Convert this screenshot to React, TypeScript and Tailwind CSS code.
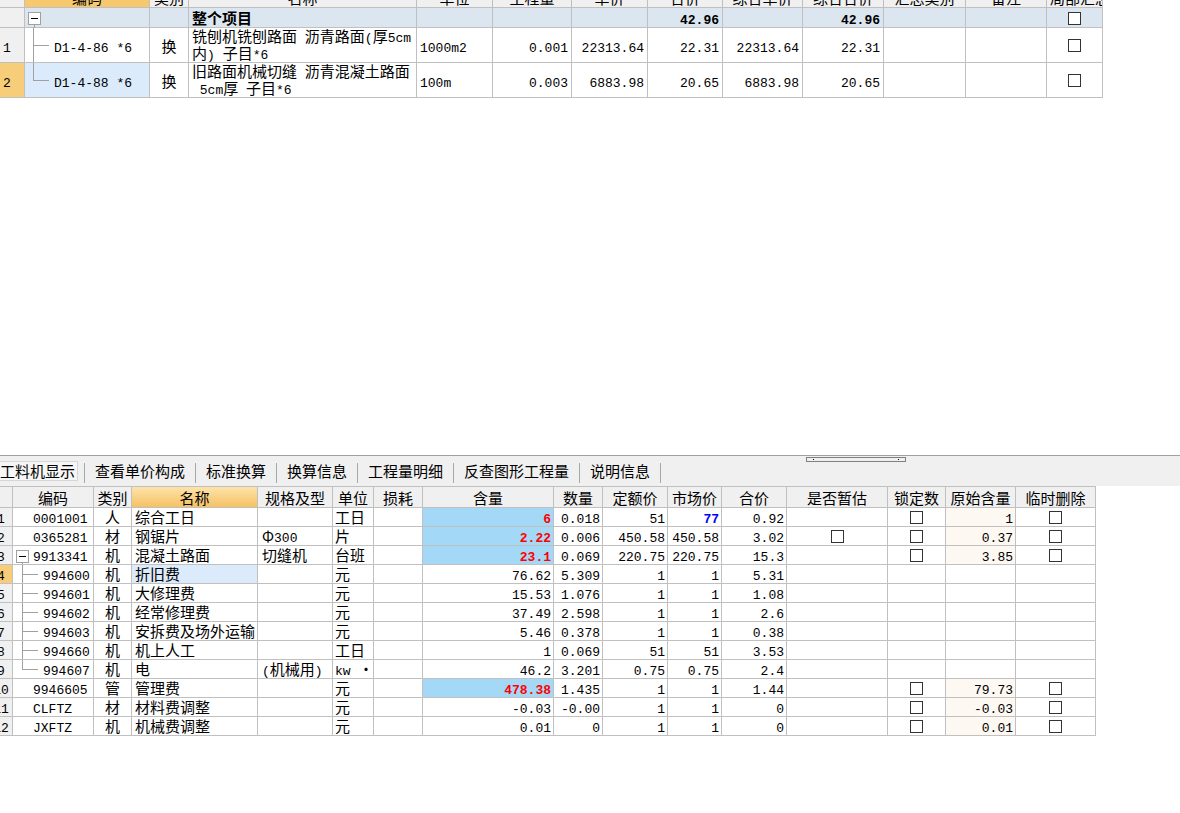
import React from "react";

const MONO = "font-['Liberation_Mono',monospace] text-[13px] leading-none whitespace-pre";

function Txt({ s, bold }: { s: string; bold?: boolean }) {
  const parts = s.split(/([\x20-\x7e]+)/).filter((p) => p.length > 0);
  return (
    <span className={bold ? "font-bold whitespace-pre" : "whitespace-pre"}>
      {parts.map((p, i) =>
        /^[\x20-\x7e]+$/.test(p) ? (
          <span key={i} className={MONO}>
            {p}
          </span>
        ) : (
          <span key={i}>{p}</span>
        )
      )}
    </span>
  );
}

function Check() {
  return <span className="inline-block w-[13px] h-[13px] border border-[#333] bg-white box-border" />;
}

function MinusBox() {
  return (
    <span className="absolute w-[13px] h-[13px] border border-[#a0a0a0] bg-white box-border flex items-center justify-center">
      <span className="block w-[7px] h-px bg-black" />
    </span>
  );
}

type Align = "l" | "r" | "c";
const alignCls = (a: Align) => (a === "l" ? "justify-start" : a === "r" ? "justify-end" : "justify-center");

/* ---------------- Top table ---------------- */
const TW = [25, 125, 39, 228, 76, 79, 76, 75, 80, 81, 82, 81, 56];
const THEAD = ["", "编码", "类别", "名称", "单位", "工程量", "单价", "合价", "综合单价", "综合合价", "汇总类别", "备注", "局部汇总"];

function TopTable() {
  const cellBase = "relative flex items-center border-r border-b border-[#c0c0c0] box-border overflow-hidden shrink-0";
  return (
    <div className="w-[1103px]">
      {/* header (scrolled / clipped) */}
      <div className="flex h-[22px] -mt-[14px]">
        {THEAD.map((h, i) => (
          <div
            key={i}
            style={{ width: TW[i] }}
            className={
              "relative flex items-end border-r border-b border-[#c0c0c0] box-border overflow-hidden shrink-0 leading-[19px] " +
              (i === 1 ? "bg-[#f7c86e] " : "bg-[#f0f0f0] ") +
              (i === 12 ? "justify-start pl-[3px]" : "justify-center")
            }
          >
            <Txt s={h} />
          </div>
        ))}
      </div>
      {/* 整个项目 */}
      <div className="flex h-[20px] leading-[19px]">
        {TW.map((w, i) => {
          let content: React.ReactNode = null;
          let a: Align = "l";
          if (i === 1)
            content = (
              <span className="relative block w-full h-full">
                <span className="absolute left-[3px] top-[4px]">
                  <MinusBox />
                </span>
                <span className="absolute left-[9px] top-[16px] w-px h-[4px] bg-[#a0a0a0]" />
              </span>
            );
          if (i === 3) content = <span className="pl-[3px]"><Txt s="整个项目" bold /></span>;
          if (i === 7 || i === 9) {
            content = <span className="pr-[3px]"><Txt s="42.96" bold /></span>;
            a = "r";
          }
          if (i === 12) {
            content = <span className="mt-[2px] flex"><Check /></span>;
            a = "c";
          }
          return (
            <div
              key={i}
              style={{ width: w }}
              className={cellBase + " " + alignCls(a) + " " + (i === 0 ? "bg-[#f0f0f0]" : "bg-[#dce6f0]") + (i === 1 ? " overflow-visible" : "")}
            >
              {content}
            </div>
          );
        })}
      </div>
      {[
        {
          n: "1",
          code: "D1-4-86 *6",
          name: ["铣刨机铣刨路面 沥青路面(厚5cm", "内) 子目*6"],
          unit: "1000m2",
          vals: ["0.001", "22313.64", "22.31", "22313.64", "22.31"],
          sel: false,
          last: false,
        },
        {
          n: "2",
          code: "D1-4-88 *6",
          name: ["旧路面机械切缝 沥青混凝土路面", " 5cm厚 子目*6"],
          unit: "100m",
          vals: ["0.003", "6883.98", "20.65", "6883.98", "20.65"],
          sel: true,
          last: true,
        },
      ].map((r, ri) => (
        <div key={ri} className="flex h-[35px] leading-[19px] bg-white">
          <div style={{ width: TW[0] }} className={cellBase + " justify-start pl-[3px] " + (r.sel ? "bg-[#f8cd7a]" : "bg-[#f0f0f0]")}>
            <Txt s={r.n} />
          </div>
          <div style={{ width: TW[1] }} className={cellBase + " justify-start pl-[29px] " + (r.sel ? "bg-[#dcebfc]" : "")}>
            <span className={"absolute left-[8px] top-0 w-px bg-[#a0a0a0] " + (r.last ? "h-[17px]" : "h-full")} />
            <span className="absolute left-[8px] top-[17px] w-[16px] h-px bg-[#a0a0a0]" />
            <Txt s={r.code} />
          </div>
          <div style={{ width: TW[2] }} className={cellBase + " justify-center"}>
            <Txt s="换" />
          </div>
          <div style={{ width: TW[3] }} className={cellBase + " justify-start pl-[3px]"}>
            <div className="flex flex-col leading-[15px]">
              <Txt s={r.name[0]} />
              <Txt s={r.name[1]} />
            </div>
          </div>
          <div style={{ width: TW[4] }} className={cellBase + " justify-start pl-[3px]"}>
            <Txt s={r.unit} />
          </div>
          {r.vals.map((v, vi) => (
            <div key={vi} style={{ width: TW[5 + vi] }} className={cellBase + " justify-end pr-[3px]"}>
              <Txt s={v} />
            </div>
          ))}
          <div style={{ width: TW[10] }} className={cellBase} />
          <div style={{ width: TW[11] }} className={cellBase} />
          <div style={{ width: TW[12] }} className={cellBase + " justify-center"}>
            <Check />
          </div>
        </div>
      ))}
    </div>
  );
}

/* ---------------- Tabs ---------------- */
const TABS = ["查看单价构成", "标准换算", "换算信息", "工程量明细", "反查图形工程量", "说明信息"];

function TabBar() {
  return (
    <div className="relative h-[31px] border-t border-[#a0a0a0] bg-[#f0f0f0] flex items-center">
      <div className="flex items-center h-[20px]">
        <div className="h-[20px] flex items-center -ml-[3px] pl-[2px] pr-[2px] border border-[#d6d6d6] bg-[#f6f6f6] leading-[18px]">
          <Txt s="工料机显示" />
        </div>
        <div className="w-[6px]" />
        <div className="w-px h-[20px] bg-[#a8a8a8] mt-[4px]" />
        {TABS.map((t, i) => (
          <React.Fragment key={i}>
            <div className="pl-[10px] pr-[10px] leading-[18px] flex items-center">
              <Txt s={t} />
            </div>
            <div className="w-px h-[20px] bg-[#a8a8a8] mt-[4px]" />
          </React.Fragment>
        ))}
      </div>
      {/* splitter grip */}
      <div className="absolute left-[806px] top-[1px] w-[100px] h-[5px] border border-[#808080] box-border bg-[#f0f0f0]">
        <span className="absolute left-[6px] top-[1px] w-px h-px bg-[#000080]" />
        <span className="absolute left-[91px] top-[1px] w-px h-px bg-[#000080]" />
      </div>
    </div>
  );
}

/* ---------------- Bottom table ---------------- */
const BW = [23, 81, 38, 126, 75, 41, 49, 131, 49, 65, 54, 65, 101, 58, 70, 80];
const BHEAD = ["", "编码", "类别", "名称", "规格及型", "单位", "损耗", "含量", "数量", "定额价", "市场价", "合价", "是否暂估", "锁定数", "原始含量", "临时删除"];

type BRow = {
  code: string;
  lvl: 0 | 1 | 2;
  lastChild?: boolean;
  cat: string;
  name: string;
  spec: string;
  unit: string;
  qty: string;
  qtyHi?: boolean;
  num: string;
  quota: string;
  market: string;
  marketBlue?: boolean;
  total: string;
  est?: boolean;
  lock?: boolean;
  orig: string;
  del?: boolean;
  sel?: boolean;
};

const BROWS: BRow[] = [
  { code: "0001001", lvl: 0, cat: "人", name: "综合工日", spec: "", unit: "工日", qty: "6", qtyHi: true, num: "0.018", quota: "51", market: "77", marketBlue: true, total: "0.92", lock: true, orig: "1", del: true },
  { code: "0365281", lvl: 0, cat: "材", name: "钢锯片", spec: "Φ300", unit: "片", qty: "2.22", qtyHi: true, num: "0.006", quota: "450.58", market: "450.58", total: "3.02", est: true, lock: true, orig: "0.37", del: true },
  { code: "9913341", lvl: 1, cat: "机", name: "混凝土路面", spec: "切缝机", unit: "台班", qty: "23.1", qtyHi: true, num: "0.069", quota: "220.75", market: "220.75", total: "15.3", lock: true, orig: "3.85", del: true },
  { code: "994600", lvl: 2, cat: "机", name: "折旧费", spec: "", unit: "元", qty: "76.62", num: "5.309", quota: "1", market: "1", total: "5.31", orig: "", sel: true },
  { code: "994601", lvl: 2, cat: "机", name: "大修理费", spec: "", unit: "元", qty: "15.53", num: "1.076", quota: "1", market: "1", total: "1.08", orig: "" },
  { code: "994602", lvl: 2, cat: "机", name: "经常修理费", spec: "", unit: "元", qty: "37.49", num: "2.598", quota: "1", market: "1", total: "2.6", orig: "" },
  { code: "994603", lvl: 2, cat: "机", name: "安拆费及场外运输", spec: "", unit: "元", qty: "5.46", num: "0.378", quota: "1", market: "1", total: "0.38", orig: "" },
  { code: "994660", lvl: 2, cat: "机", name: "机上人工", spec: "", unit: "工日", qty: "1", num: "0.069", quota: "51", market: "51", total: "3.53", orig: "" },
  { code: "994607", lvl: 2, lastChild: true, cat: "机", name: "电", spec: "(机械用)", unit: "kw ·", qty: "46.2", num: "3.201", quota: "0.75", market: "0.75", total: "2.4", orig: "" },
  { code: "9946605", lvl: 0, cat: "管", name: "管理费", spec: "", unit: "元", qty: "478.38", qtyHi: true, num: "1.435", quota: "1", market: "1", total: "1.44", lock: true, orig: "79.73", del: true },
  { code: "CLFTZ", lvl: 0, cat: "材", name: "材料费调整", spec: "", unit: "元", qty: "-0.03", num: "-0.00", quota: "1", market: "1", total: "0", lock: true, orig: "-0.03", del: true },
  { code: "JXFTZ", lvl: 0, cat: "机", name: "机械费调整", spec: "", unit: "元", qty: "0.01", num: "0", quota: "1", market: "1", total: "0", lock: true, orig: "0.01", del: true },
];

function BottomTable() {
  const cb = "relative flex items-center border-r border-b border-[#c0c0c0] box-border overflow-hidden shrink-0";
  return (
    <div className="-ml-[10px] w-[1106px]">
      <div className="flex h-[22px] border-t border-[#c0c0c0] leading-[19px]">
        {BHEAD.map((h, i) => (
          <div
            key={i}
            style={{ width: BW[i] }}
            className={
              cb +
              " justify-center whitespace-nowrap " +
              (i === 3 ? "bg-gradient-to-b from-[#fde3a9] to-[#f5c163]" : "bg-[#f0f0f0]")
            }
          >
            <Txt s={h} />
          </div>
        ))}
      </div>
      {BROWS.map((r, ri) => (
        <div key={ri} className="flex h-[19px] leading-[18px] bg-white">
          <div style={{ width: BW[0] }} className={cb + " justify-center " + (r.sel ? "bg-[#f8cd7a]" : "bg-[#f0f0f0]")}>
            <Txt s={String(ri + 1)} />
          </div>
          <div style={{ width: BW[1] }} className={cb + " justify-start " + (r.lvl === 2 ? "pl-[30px]" : "pl-[20px]")}>
            {r.lvl === 1 && (
              <>
                <span className="absolute left-[3px] top-[4px]">
                  <MinusBox />
                </span>
                <span className="absolute left-[9px] top-[17px] w-px h-[2px] bg-[#a0a0a0]" />
              </>
            )}
            {r.lvl === 2 && (
              <>
                <span className={"absolute left-[9px] top-0 w-px bg-[#a0a0a0] " + (r.lastChild ? "h-[10px]" : "h-full")} />
                <span className="absolute left-[9px] top-[9px] w-[16px] h-px bg-[#a0a0a0]" />
              </>
            )}
            <Txt s={r.code} />
          </div>
          <div style={{ width: BW[2] }} className={cb + " justify-center"}>
            <Txt s={r.cat} />
          </div>
          <div style={{ width: BW[3] }} className={cb + " justify-start pl-[3px] whitespace-nowrap " + (r.sel ? "bg-[#dcebfc]" : "")}>
            <Txt s={r.name} />
          </div>
          <div style={{ width: BW[4] }} className={cb + " justify-start pl-[4px] whitespace-nowrap"}>
            <Txt s={r.spec} />
          </div>
          <div style={{ width: BW[5] }} className={cb + " justify-start pl-[2px] whitespace-nowrap"}>
            <Txt s={r.unit} />
          </div>
          <div style={{ width: BW[6] }} className={cb} />
          <div style={{ width: BW[7] }} className={cb + " justify-end pr-[2px] " + (r.qtyHi ? "bg-[#a3d8f6] text-[#ff0000]" : "")}>
            <Txt s={r.qty} bold={r.qtyHi} />
          </div>
          <div style={{ width: BW[8] }} className={cb + " justify-end pr-[2px]"}>
            <Txt s={r.num} />
          </div>
          <div style={{ width: BW[9] }} className={cb + " justify-end pr-[2px]"}>
            <Txt s={r.quota} />
          </div>
          <div style={{ width: BW[10] }} className={cb + " justify-end pr-[2px] " + (r.marketBlue ? "text-[#0000ff]" : "")}>
            <Txt s={r.market} bold={r.marketBlue} />
          </div>
          <div style={{ width: BW[11] }} className={cb + " justify-end pr-[2px]"}>
            <Txt s={r.total} />
          </div>
          <div style={{ width: BW[12] }} className={cb + " justify-center"}>
            {r.est && <Check />}
          </div>
          <div style={{ width: BW[13] }} className={cb + " justify-center"}>
            {r.lock && <Check />}
          </div>
          <div style={{ width: BW[14] }} className={cb + " justify-end pr-[2px] " + (r.orig ? "bg-[#fdf8f2]" : "")}>
            <Txt s={r.orig} />
          </div>
          <div style={{ width: BW[15] }} className={cb + " justify-center"}>
            {r.del && <Check />}
          </div>
        </div>
      ))}
    </div>
  );
}

export default function App() {
  return (
    <div className="w-[1180px] h-[813px] overflow-hidden bg-white text-black font-['Noto_Sans_CJK_SC',sans-serif] text-[15px] flex flex-col">
      <div className="h-[455px] shrink-0 overflow-hidden">
        <TopTable />
      </div>
      <TabBar />
      <div className="overflow-hidden">
        <BottomTable />
      </div>
    </div>
  );
}
